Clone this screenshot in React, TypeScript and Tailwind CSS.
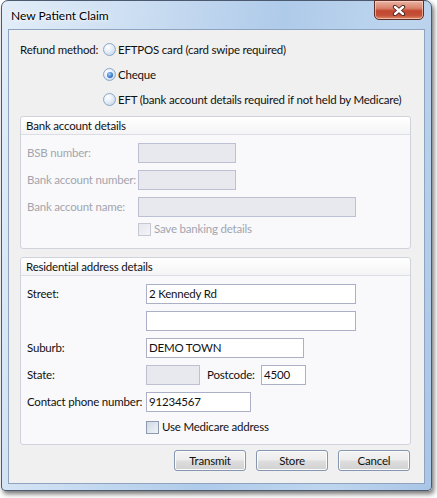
import React from 'react';

const font = "font-['Lato','Liberation_Sans',sans-serif] text-[11.5px] tracking-[-0.2px] whitespace-nowrap";

function Radio({ checked = false }: { checked?: boolean }) {
    return (
        <span className="flex items-center justify-center w-[13px] h-[13px] rounded-full border border-[#8ea6c4] bg-[radial-gradient(circle_at_35%_30%,#ffffff_0%,#e4edf7_45%,#bcd0e8_100%)] shrink-0">
            {checked && (
                <span className="w-[6px] h-[6px] rounded-full bg-[radial-gradient(circle_at_40%_35%,#a9d3f7_0%,#3a7cc9_55%,#1b56a3_100%)]" />
            )}
        </span>
    );
}

function Check({ disabled = false }: { disabled?: boolean }) {
    return (
        <span
            className={
                disabled
                    ? 'w-[13px] h-[13px] border border-[#c6c9d2] bg-[linear-gradient(135deg,#e6e8ee,#f3f4f7)] shrink-0'
                    : 'w-[13px] h-[13px] border border-[#8e9aae] bg-[linear-gradient(135deg,#cfd9e6,#f1f4f8)] shrink-0'
            }
        />
    );
}

function Field({
    width,
    value = '',
    disabled = false,
}: {
    width: string;
    value?: string;
    disabled?: boolean;
}) {
    return (
        <div
            className={
                (disabled
                    ? 'bg-[#e8e9ef] border-[#bcc0d2] '
                    : 'bg-white border-[#abb0c6] ') +
                width +
                ' h-[20px] border flex items-center pl-[2px] text-[#111] shrink-0'
            }
        >
            {value}
        </div>
    );
}

function GroupBox({ title, children }: { title: string; children: React.ReactNode }) {
    return (
        <div className="ml-[11px] w-[391px] rounded-[3px] border border-[#d0d3dc] bg-[#f9f9fb]">
            <div className="h-[18px] flex items-center pl-[5px] border-b border-[#dcdee5] bg-[linear-gradient(#ffffff,#f4f4f6)] rounded-t-[3px] text-[#111]">
                {title}
            </div>
            {children}
        </div>
    );
}

function Button({ label }: { label: string }) {
    return (
        <button className="w-[72px] h-[21px] rounded-[3px] border border-[#8596b0] bg-[linear-gradient(#f4f4f4_0%,#ececec_48%,#dedede_52%,#d1d1d1_100%)] shadow-[inset_0_0_0_1px_#fcfcfc] text-[#111]">
            {label}
        </button>
    );
}

export default function App() {
    return (
        <div className={`w-[437px] h-[498px] bg-white pl-[1px] ${font}`}>
            {/* Window frame */}
            <div className="relative w-[431px] h-[491px] rounded-t-[7px] rounded-b-[4px] border border-[#4b5a6e] bg-[linear-gradient(100deg,#e2edf8_0%,#cddff2_25%,#afcbea_55%,#bed5ee_80%,#a9c5e6_100%)] shadow-[2px_3px_5px_rgba(0,0,0,0.55)] px-[6px] pb-[6px]">
                {/* Title bar */}
                <div className="h-[28px] flex items-start">
                    <span className="mt-[6px] ml-[3px] text-[12px] tracking-normal text-black [text-shadow:0_0_6px_#ffffff,0_0_3px_#ffffff]">
                        New Patient Claim
                    </span>
                    <div className="ml-auto mr-[1px] w-[50px] h-[20px] -mt-[1px] rounded-b-[5px] border border-[#5d2f28] bg-[linear-gradient(#eab5a5_0%,#d9826b_40%,#c2472f_55%,#c4503a_80%,#e08a66_100%)] shadow-[inset_0_0_0_1px_rgba(255,220,210,0.6)] flex items-center justify-center">
                        <svg width="14" height="11" viewBox="0 0 14 11">
                            <path d="M3 2 L11 9 M11 2 L3 9" stroke="#43201a" strokeWidth="4.2" strokeLinecap="round" />
                            <path d="M3 2 L11 9 M11 2 L3 9" stroke="#ffffff" strokeWidth="2.4" strokeLinecap="round" />
                        </svg>
                    </div>
                </div>

                {/* Client area */}
                <div className="h-[455px] border border-[#8ea3bf] bg-[#f0f0f0] text-[#111]">
                    {/* Refund method */}
                    <div className="flex pt-[7px] pl-[11px]">
                        <div className="w-[83px] h-[25px] flex items-center">Refund method:</div>
                        <div className="flex flex-col">
                            <div className="h-[25px] flex items-center gap-[2px]">
                                <Radio />
                                <span>EFTPOS card (card swipe required)</span>
                            </div>
                            <div className="h-[25px] flex items-center gap-[2px]">
                                <Radio checked />
                                <span>Cheque</span>
                            </div>
                            <div className="h-[25px] flex items-center gap-[2px]">
                                <Radio />
                                <span>EFT (bank account details required if not held by Medicare)</span>
                            </div>
                        </div>
                    </div>

                    {/* Bank account details */}
                    <div className="mt-[4px]">
                        <GroupBox title="Bank account details">
                            <div className="flex flex-col gap-[7px] pt-[8px] pl-[6px] h-[113px] text-[#a3a5ae]">
                                <div className="flex items-center">
                                    <span className="w-[111px]">BSB number:</span>
                                    <Field width="w-[98px]" disabled />
                                </div>
                                <div className="flex items-center">
                                    <span className="w-[111px]">Bank account number:</span>
                                    <Field width="w-[98px]" disabled />
                                </div>
                                <div className="flex items-center">
                                    <span className="w-[111px]">Bank account name:</span>
                                    <Field width="w-[218px]" disabled />
                                </div>
                                <div className="flex items-center gap-[3px] pl-[111px] h-[14px] mt-[-2px]">
                                    <Check disabled />
                                    <span>Save banking details</span>
                                </div>
                            </div>
                        </GroupBox>
                    </div>

                    {/* Residential address details */}
                    <div className="mt-[8px]">
                        <GroupBox title="Residential address details">
                            <div className="flex flex-col gap-[7px] pt-[8px] pl-[6px] h-[168px]">
                                <div className="flex items-center">
                                    <span className="w-[119px]">Street:</span>
                                    <Field width="w-[210px]" value="2 Kennedy Rd" />
                                </div>
                                <div className="flex items-center">
                                    <span className="w-[119px]" />
                                    <Field width="w-[210px]" />
                                </div>
                                <div className="flex items-center">
                                    <span className="w-[119px]">Suburb:</span>
                                    <Field width="w-[158px]" value="DEMO TOWN" />
                                </div>
                                <div className="flex items-center">
                                    <span className="w-[119px]">State:</span>
                                    <Field width="w-[54px]" disabled />
                                    <span className="ml-[7px] w-[54px]">Postcode:</span>
                                    <Field width="w-[45px]" value="4500" />
                                </div>
                                <div className="flex items-center">
                                    <span className="w-[119px]">Contact phone number:</span>
                                    <Field width="w-[105px]" value="91234567" />
                                </div>
                                <div className="flex items-center gap-[3px] pl-[119px] h-[14px] mt-[1px]">
                                    <Check />
                                    <span>Use Medicare address</span>
                                </div>
                            </div>
                        </GroupBox>
                    </div>

                    {/* Actions */}
                    <div className="flex justify-end gap-[10px] pr-[14px] mt-[5px]">
                        <Button label="Transmit" />
                        <Button label="Store" />
                        <Button label="Cancel" />
                    </div>
                </div>
            </div>
        </div>
    );
}
